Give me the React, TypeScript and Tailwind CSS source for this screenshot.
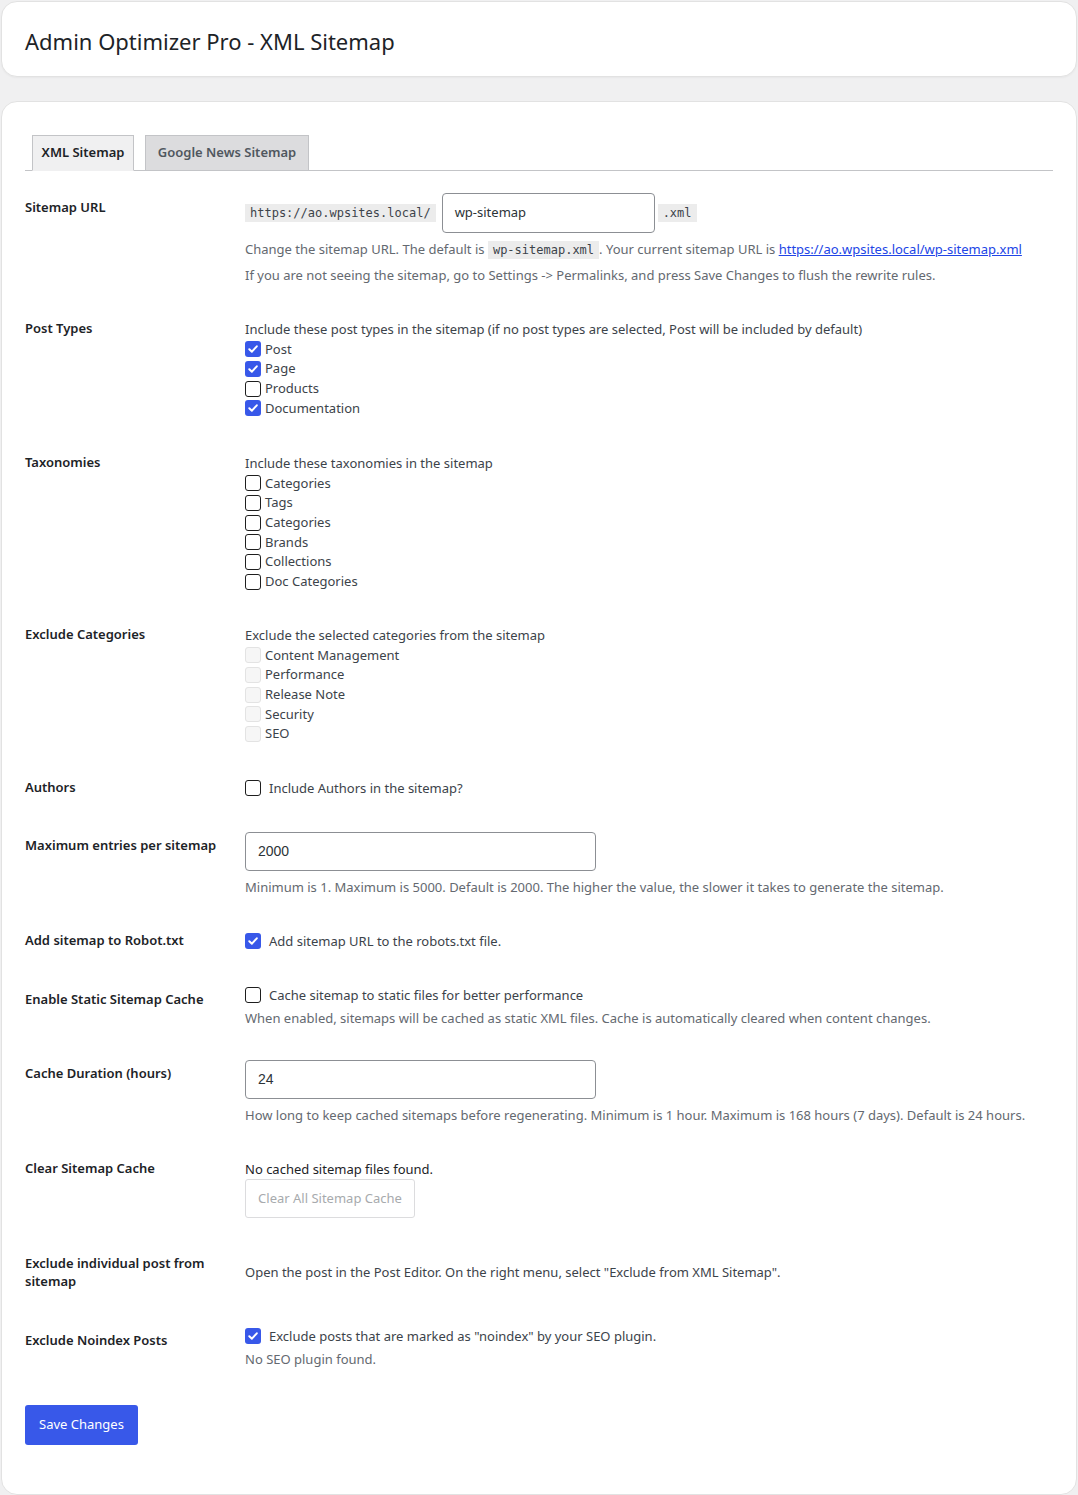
import React from "react";

const font = { fontFamily: '"Noto Sans", "Open Sans", sans-serif' };

function Box({ checked, disabled }: { checked?: boolean; disabled?: boolean }) {
  if (checked) {
    return (
      <span className="inline-flex h-4 w-4 shrink-0 items-center justify-center rounded-[3px] bg-[#3858e9]">
        <svg width="12" height="12" viewBox="0 0 12 12" fill="none">
          <path d="M2.3 6.2 L4.9 8.7 L9.8 3.3" stroke="#fff" strokeWidth="2" strokeLinecap="round" strokeLinejoin="round" />
        </svg>
      </span>
    );
  }
  if (disabled) {
    return <span className="inline-block h-4 w-4 shrink-0 rounded-[3px] border border-[#e3e3e3] bg-[#f6f6f6]" />;
  }
  return <span className="inline-block h-4 w-4 shrink-0 rounded-[3px] border-[1.5px] border-[#1e1e1e] bg-white" />;
}

function Item({ label, checked, disabled }: { label: string; checked?: boolean; disabled?: boolean }) {
  return (
    <div className="flex h-[19.65px] items-center gap-1 text-[13px] text-[#3c434a]">
      <Box checked={checked} disabled={disabled} />
      <span>{label}</span>
    </div>
  );
}

function Row({ label, h, children }: { label: React.ReactNode; h: string; children: React.ReactNode }) {
  return (
    <div className={`grid grid-cols-[220px_1fr] ${h}`}>
      <div className="pt-5 text-[13px] font-semibold leading-[18px] text-[#1d2327]">{label}</div>
      <div>{children}</div>
    </div>
  );
}

function Code({ children, className = "" }: { children: React.ReactNode; className?: string }) {
  return (
    <code
      className={`inline-block bg-[#ececec] px-[5px] text-[12px] leading-[18px] text-[#3c434a] ${className}`}
      style={{ fontFamily: '"DejaVu Sans Mono", monospace' }}
    >
      {children}
    </code>
  );
}

const desc = "text-[13px] text-[#646970]";

export default function App() {
  return (
    <div className="min-h-[1495px] bg-[#f0f0f1] px-px pt-px" style={font}>
      <div className="flex h-[76px] items-center rounded-2xl border border-[#e2e2e2] bg-white px-[23px] pt-[5px] shadow-[0_1px_2px_rgba(0,0,0,0.04)]">
        <h1 className="text-[22px] font-normal text-[#1d2327]">Admin Optimizer Pro - XML Sitemap</h1>
      </div>

      <div className="mt-6 h-[1394px] rounded-2xl border border-[#e2e2e2] bg-white px-[23px] pt-[33px]">
        <div className="flex border-b border-[#c3c4c7] pl-[7px]">
          <div className="-mb-px flex h-[36px] w-[102px] items-center justify-center border border-[#c3c4c7] border-b-[#f0f0f1] bg-[#f0f0f1] text-[13px] font-semibold text-[#1d2327]">
            XML Sitemap
          </div>
          <div className="ml-[11px] flex h-[35px] w-[164px] items-center justify-center border border-b-0 border-[#c3c4c7] bg-[#dcdcde] text-[13px] font-semibold text-[#50575e]">
            Google News Sitemap
          </div>
        </div>

        <div className="pt-[7px]">
          <Row label="Sitemap URL" h="h-[121px]">
            <div className="flex items-center pt-[15px]">
              <Code>https://ao.wpsites.local/</Code>
              <div className="ml-[6px] flex h-10 w-[213px] items-center rounded-[4px] border border-[#8c8f94] px-3 text-[13px] text-[#2c3338]">
                wp-sitemap
              </div>
              <Code className="ml-[3px]">.xml</Code>
            </div>
            <p className={`${desc} mt-[6px] leading-[20px]`}>
              Change the sitemap URL. The default is <Code>wp-sitemap.xml</Code>. Your current sitemap URL is{" "}
              <a className="text-[#2145e6] underline">https://ao.wpsites.local/wp-sitemap.xml</a>
            </p>
            <p className={`${desc} mt-[6px] leading-[20px]`}>
              If you are not seeing the sitemap, go to Settings -&gt; Permalinks, and press Save Changes to flush the rewrite rules.
            </p>
          </Row>

          <Row label="Post Types" h="h-[134px]">
            <div className="pt-[21px]">
              <p className="h-[19.65px] text-[13px] leading-[19.65px] text-[#3c434a]">
                Include these post types in the sitemap (if no post types are selected, Post will be included by default)
              </p>
              <Item label="Post" checked />
              <Item label="Page" checked />
              <Item label="Products" />
              <Item label="Documentation" checked />
            </div>
          </Row>

          <Row label="Taxonomies" h="h-[172px]">
            <div className="pt-[21px]">
              <p className="h-[19.65px] text-[13px] leading-[19.65px] text-[#3c434a]">Include these taxonomies in the sitemap</p>
              <Item label="Categories" />
              <Item label="Tags" />
              <Item label="Categories" />
              <Item label="Brands" />
              <Item label="Collections" />
              <Item label="Doc Categories" />
            </div>
          </Row>

          <Row label="Exclude Categories" h="h-[153px]">
            <div className="pt-[21px]">
              <p className="h-[19.65px] text-[13px] leading-[19.65px] text-[#3c434a]">Exclude the selected categories from the sitemap</p>
              <Item label="Content Management" disabled />
              <Item label="Performance" disabled />
              <Item label="Release Note" disabled />
              <Item label="Security" disabled />
              <Item label="SEO" disabled />
            </div>
          </Row>

          <Row label="Authors" h="h-[58px]">
            <div className="flex items-center gap-2 pt-[21px] text-[13px] leading-[18px] text-[#3c434a]">
              <Box />
              <span>Include Authors in the sitemap?</span>
            </div>
          </Row>

          <Row label="Maximum entries per sitemap" h="h-[95px]">
            <div className="pt-4">
              <div
                className="flex h-[39px] w-[351px] items-center rounded-[4px] border border-[#8c8f94] px-3 text-[14px] text-[#2c3338]"
                style={{ fontFamily: '"Liberation Sans", Arial, sans-serif' }}
              >
                2000
              </div>
              <p className={`${desc} mt-[6px] leading-[20px]`}>
                Minimum is 1. Maximum is 5000. Default is 2000. The higher the value, the slower it takes to generate the sitemap.
              </p>
            </div>
          </Row>

          <Row label="Add sitemap to Robot.txt" h="h-[59px]">
            <div className="flex items-center gap-2 pt-[21px] text-[13px] leading-[18px] text-[#3c434a]">
              <Box checked />
              <span>Add sitemap URL to the robots.txt file.</span>
            </div>
          </Row>

          <Row label="Enable Static Sitemap Cache" h="h-[74px]">
            <div className="pt-4">
              <div className="flex items-center gap-2 text-[13px] leading-[18px] text-[#3c434a]">
                <Box />
                <span>Cache sitemap to static files for better performance</span>
              </div>
              <p className={`${desc} mt-[4px] leading-[20px]`}>
                When enabled, sitemaps will be cached as static XML files. Cache is automatically cleared when content changes.
              </p>
            </div>
          </Row>

          <Row label="Cache Duration (hours)" h="h-[95px]">
            <div className="pt-4">
              <div
                className="flex h-[39px] w-[351px] items-center rounded-[4px] border border-[#8c8f94] px-3 text-[14px] text-[#2c3338]"
                style={{ fontFamily: '"Liberation Sans", Arial, sans-serif' }}
              >
                24
              </div>
              <p className={`${desc} mt-[6px] leading-[20px]`}>
                How long to keep cached sitemaps before regenerating. Minimum is 1 hour. Maximum is 168 hours (7 days). Default is 24 hours.
              </p>
            </div>
          </Row>

          <Row label="Clear Sitemap Cache" h="h-[95px]">
            <div className="pt-[20px]">
              <p className="text-[13px] leading-[20px] text-[#1d2327]">No cached sitemap files found.</p>
              <button className="flex h-[39px] w-[170px] items-center justify-center rounded-[3px] border border-[#dcdcde] bg-white text-[13px] text-[#a7aaad]">
                Clear All Sitemap Cache
              </button>
            </div>
          </Row>

          <Row
            label={
              <span>
                Exclude individual post from
                <br />
                sitemap
              </span>
            }
            h="h-[77px]"
          >
            <p className="pt-[28px] text-[13px] leading-[20px] text-[#3c434a]">
              Open the post in the Post Editor. On the right menu, select "Exclude from XML Sitemap".
            </p>
          </Row>

          <Row label="Exclude Noindex Posts" h="h-[80px]">
            <div className="pt-4">
              <div className="flex items-center gap-2 text-[13px] leading-[18px] text-[#3c434a]">
                <Box checked />
                <span>Exclude posts that are marked as "noindex" by your SEO plugin.</span>
              </div>
              <p className={`${desc} mt-[4px] leading-[20px]`}>No SEO plugin found.</p>
            </div>
          </Row>
        </div>

        <button className="mt-[14px] flex h-10 w-[113px] items-center justify-center rounded-[3px] bg-[#3858e9] text-[13px] text-white">
          Save Changes
        </button>
      </div>
    </div>
  );
}
